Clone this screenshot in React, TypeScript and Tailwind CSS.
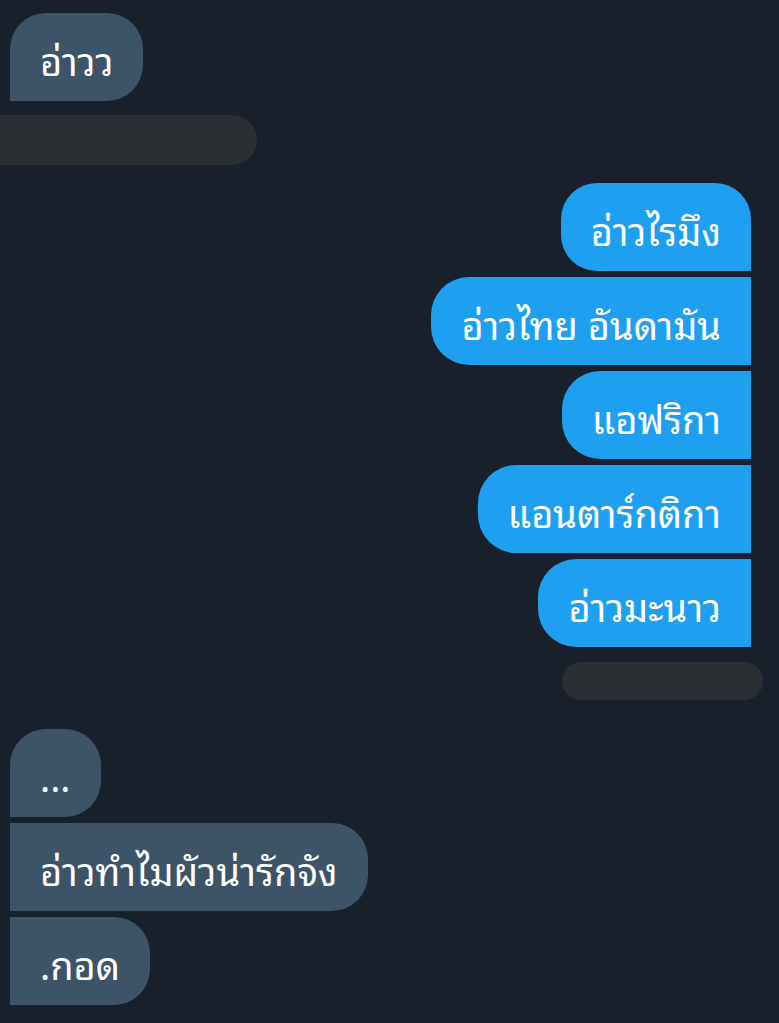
const font = { fontFamily: '"Noto Sans Thai Looped", "Noto Sans Thai", "Noto Sans", "DejaVu Sans", sans-serif' };

type Side = "in" | "out";
type Pos = "first" | "middle" | "last";

function Bubble({ text, side, pos }: { text: string; side: Side; pos: Pos }) {
  const base = "flex h-[88px] items-center px-[30px] pt-[4px] text-[38px] leading-none text-white";
  if (side === "in") {
    const shape =
      pos === "first"
        ? "rounded-t-[36px] rounded-br-[36px]"
        : "rounded-r-[36px]";
    return <div className={`${base} ${shape} bg-[#3d5468]`}>{text}</div>;
  }
  const shape =
    pos === "first"
      ? "rounded-t-[36px] rounded-bl-[36px]"
      : "rounded-l-[38px]";
  return <div className={`${base} ${shape} bg-[#1f9ff0]`}>{text}</div>;
}

export default function App() {
  return (
    <div className="h-[1023px] w-[779px] overflow-hidden bg-[#18202b] pt-[13px]" style={font}>
      <div className="flex flex-col items-start pl-[10px]">
        <Bubble text="อ่าวว" side="in" pos="first" />
      </div>
      <div className="mt-[14px] h-[50px] w-[257px] rounded-r-full bg-[#2b2f34]" />

      <div className="mt-[18px] flex flex-col items-end gap-[6px] pr-[28px]">
        <Bubble text="อ่าวไรมึง" side="out" pos="first" />
        <Bubble text="อ่าวไทย อันดามัน" side="out" pos="middle" />
        <Bubble text="แอฟริกา" side="out" pos="middle" />
        <Bubble text="แอนตาร์กติกา" side="out" pos="middle" />
        <Bubble text="อ่าวมะนาว" side="out" pos="last" />
      </div>
      <div className="mt-[15px] flex justify-end pr-[16px]">
        <div className="h-[38px] w-[201px] rounded-full bg-[#2b2f34]" />
      </div>

      <div className="mt-[29px] flex flex-col items-start gap-[6px] pl-[10px]">
        <Bubble text="..." side="in" pos="first" />
        <Bubble text="อ่าวทำไมผัวน่ารักจัง" side="in" pos="middle" />
        <Bubble text=".กอด" side="in" pos="last" />
      </div>
    </div>
  );
}
